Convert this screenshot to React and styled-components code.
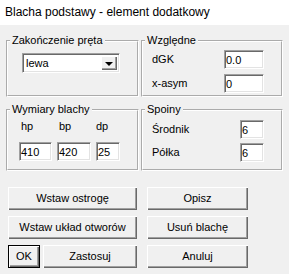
import React from 'react';
import styled, { createGlobalStyle } from 'styled-components';

const GlobalStyle = createGlobalStyle`
  html, body { margin: 0; padding: 0; background: #f0f0f0; }
`;

function Field({ value, width }) {
  return <Input readOnly value={value} $width={width} />;
}

function App() {
  return (
    <Window>
      <GlobalStyle />
      <TitleBar>Blacha podstawy - element dodatkowy</TitleBar>
      <Body>
        <Groups>
          <Group>
            <Legend>Zakończenie pręta</Legend>
            <ComboWrap>
              <Combo>
                <ComboText>lewa</ComboText>
                <ComboButton><Arrow /></ComboButton>
              </Combo>
            </ComboWrap>
          </Group>
          <Group>
            <Legend>Względne</Legend>
            <FormGrid $input={40} $top={3} $gap={5}>
              <Label>dGK</Label>
              <Field value="0.0" width={40} />
              <Label>x-asym</Label>
              <Field value="0" width={40} />
            </FormGrid>
          </Group>
          <Group>
            <Legend>Wymiary blachy</Legend>
            <Dims>
              <DimCol>
                <DimLabel $indent={2}>hp</DimLabel>
                <Field value="410" width={33} />
              </DimCol>
              <DimCol>
                <DimLabel $indent={2}>bp</DimLabel>
                <Field value="420" width={34} />
              </DimCol>
              <DimCol>
                <DimLabel $indent={0}>dp</DimLabel>
                <Field value="25" width={24} />
              </DimCol>
            </Dims>
          </Group>
          <Group>
            <Legend>Spoiny</Legend>
            <FormGrid $input={24} $top={4} $gap={4}>
              <Label>Środnik</Label>
              <Field value="6" width={24} />
              <Label>Półka</Label>
              <Field value="6" width={24} />
            </FormGrid>
          </Group>
        </Groups>
        <Buttons>
          <Button>Wstaw ostrogę</Button>
          <Button>Opisz</Button>
          <Button>Wstaw układ otworów</Button>
          <Button>Usuń blachę</Button>
          <SplitRow>
            <Button $default>OK</Button>
            <Button>Zastosuj</Button>
          </SplitRow>
          <Button>Anuluj</Button>
        </Buttons>
      </Body>
    </Window>
  );
}

const Window = styled.div`
  width: 289px;
  height: 274px;
  background: #f0f0f0;
  font-family: "Liberation Sans", Arial, sans-serif;
  font-size: 11px;
  color: #000;
  overflow: hidden;
`;

const TitleBar = styled.div`
  height: 25px;
  background: #fff;
  padding-left: 5px;
  font-size: 12px;
  line-height: 24px;
`;

const Body = styled.div`
  padding: 9px 5px 0 6px;
`;

const Groups = styled.div`
  display: grid;
  grid-template-columns: 133px 142px;
  grid-template-rows: 63px 68px;
  column-gap: 2px;
  row-gap: 6px;
`;

const Group = styled.fieldset`
  margin: 0;
  padding: 0;
  min-width: 0;
  border: 2px groove #fff;
`;

const Legend = styled.legend`
  margin-left: 2px;
  padding: 0 2px;
  line-height: 13px;
`;

const ComboWrap = styled.div`
  padding: 6px 0 0 14px;
`;

const Combo = styled.div`
  width: 98px;
  height: 20px;
  box-sizing: border-box;
  display: flex;
  align-items: stretch;
  background: #fff;
  border: 1px solid;
  border-color: #a0a0a0 #fff #fff #a0a0a0;
  box-shadow: inset 1px 1px 0 #696969, inset -1px -1px 0 #e3e3e3;
  padding: 2px;
`;

const ComboText = styled.div`
  flex: 1;
  padding-left: 1px;
  line-height: 14px;
`;

const ComboButton = styled.div`
  width: 16px;
  display: flex;
  align-items: center;
  justify-content: center;
  background: #f0f0f0;
  box-shadow: inset 1px 1px 0 #fff, inset -1px -1px 0 #696969, inset -2px -2px 0 #a0a0a0;
`;

const Arrow = styled.div`
  width: 0;
  height: 0;
  border-left: 4px solid transparent;
  border-right: 4px solid transparent;
  border-top: 4px solid #000;
  margin-top: 1px;
`;

const FormGrid = styled.div`
  display: grid;
  grid-template-columns: 1fr ${(p) => p.$input}px;
  row-gap: ${(p) => p.$gap}px;
  align-items: center;
  padding: ${(p) => p.$top}px 17px 0 9px;
`;

const Label = styled.div`
  line-height: 13px;
`;

const Input = styled.input`
  box-sizing: border-box;
  width: ${(p) => p.$width}px;
  height: 19px;
  margin: 0;
  padding: 0 0 0 1px;
  font: inherit;
  color: #000;
  background: #fff;
  border: 1px solid;
  border-color: #a0a0a0 #fff #fff #a0a0a0;
  box-shadow: inset 1px 1px 0 #696969, inset -1px -1px 0 #e3e3e3;
  outline: none;
`;

const Dims = styled.div`
  display: flex;
  gap: 5px;
  padding: 4px 0 0 11px;
`;

const DimCol = styled.div`
  display: flex;
  flex-direction: column;
  gap: 9px;
`;

const DimLabel = styled.div`
  line-height: 13px;
  padding-left: ${(p) => p.$indent}px;
`;

const Buttons = styled.div`
  display: grid;
  grid-template-columns: 129px 101px;
  grid-template-rows: repeat(3, 23px);
  column-gap: 10px;
  row-gap: 6px;
  margin: 16px 0 0 2px;
`;

const SplitRow = styled.div`
  display: grid;
  grid-template-columns: 32px 1fr;
  column-gap: 3px;
`;

const Button = styled.button`
  margin: 0;
  padding: 0;
  font: inherit;
  color: #000;
  background: #f0f0f0;
  border: ${(p) => (p.$default ? '1px solid #000' : 'none')};
  box-shadow: inset 1px 1px 0 #fff, inset -1px -1px 0 #696969, inset -2px -2px 0 #a0a0a0;
  text-align: center;
  line-height: 13px;
`;

export default App;
